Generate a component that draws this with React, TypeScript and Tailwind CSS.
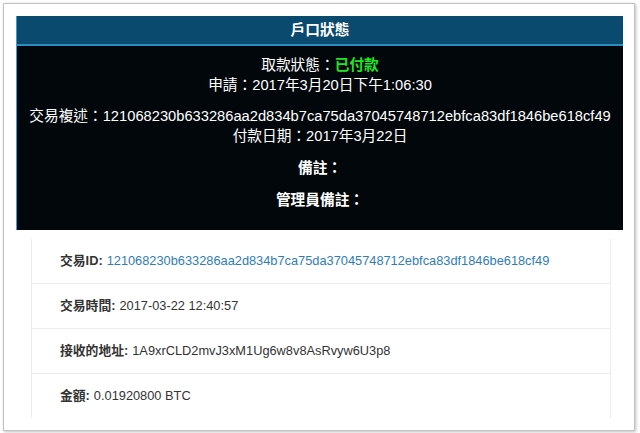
const TXID = '121068230b633286aa2d834b7ca75da37045748712ebfca83df1846be618cf49';

const ROWS = [
  { label: '交易ID:', value: TXID, link: true },
  { label: '交易時間:', value: '2017-03-22 12:40:57' },
  { label: '接收的地址:', value: '1A9xrCLD2mvJ3xM1Ug6w8v8AsRvyw6U3p8' },
  { label: '金額:', value: '0.01920800 BTC' },
];

const font = { fontFamily: '"Liberation Sans", "Noto Sans CJK TC", sans-serif' };

export default function App() {
  return (
    <div className="w-[640px] h-[433px] bg-white pt-[3px] pl-[3px] overflow-hidden" style={font}>
      <div className="w-[632px] h-[428px] border border-[#c2c2c2] bg-white shadow-[1px_1px_3px_rgba(0,0,0,0.25)] overflow-hidden">
        {/* status panel */}
        <div className="ml-[12px] mt-[12px] w-[607px] border-l border-[#3c9bd2]">
          <div className="h-[30px] bg-[#0b4a6f] border-b-2 border-[#2d8dbf] flex items-center justify-center text-white font-bold text-[14.7px]">
            戶口狀態
          </div>
          <div className="bg-[#02070c] text-white text-[14.7px] leading-[20px] text-center pt-[9px] pb-[20px]">
            <p>
              取款狀態：<span className="font-bold text-[#22e622]">已付款</span>
            </p>
            <p>申請：2017年3月20日下午1:06:30</p>
            <p className="mt-[11px] whitespace-nowrap">交易複述：{TXID}</p>
            <p>付款日期：2017年3月22日</p>
            <p className="mt-[12px] font-bold">備註：</p>
            <p className="mt-[12px] font-bold">管理員備註：</p>
          </div>
        </div>

        {/* transaction details */}
        <div className="ml-[27px] mt-[9px] w-[580px] border-x border-[#ececec] text-[12.8px] text-[#333]">
          {ROWS.map((r, i) => (
            <div
              key={r.label}
              className={`flex items-center pl-[28px] ${i === 0 ? 'h-[44px]' : 'h-[45px] border-t border-[#ececec]'}`}
            >
              <span className="font-bold mr-[4px]">{r.label}</span>
              <span className={r.link ? 'text-[#2f7db6]' : ''}>{r.value}</span>
            </div>
          ))}
        </div>
      </div>
    </div>
  );
}
